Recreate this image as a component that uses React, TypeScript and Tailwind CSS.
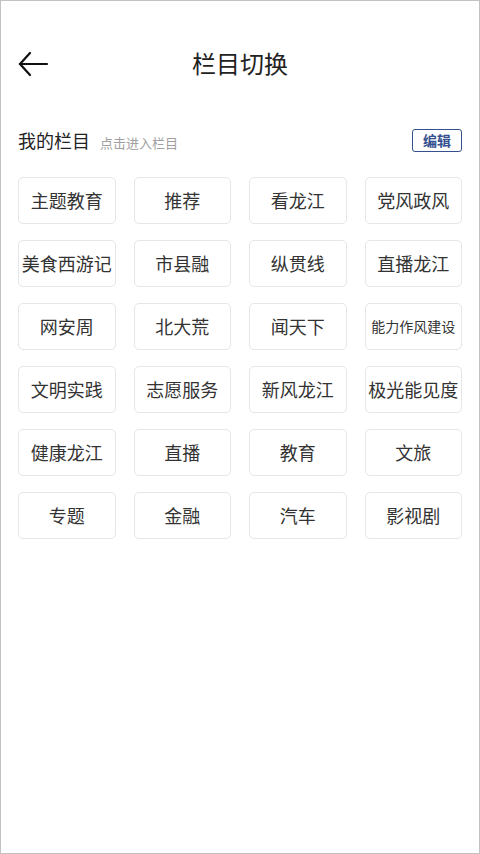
const channels = [
  '主题教育', '推荐', '看龙江', '党风政风',
  '美食西游记', '市县融', '纵贯线', '直播龙江',
  '网安周', '北大荒', '闻天下', '能力作风建设',
  '文明实践', '志愿服务', '新风龙江', '极光能见度',
  '健康龙江', '直播', '教育', '文旅',
  '专题', '金融', '汽车', '影视剧'
];

function BackArrow() {
  return (
    <svg width="32" height="32" viewBox="0 0 32 32" fill="none" stroke="#111" strokeWidth="2.2" strokeLinecap="round">
      <path d="M3 16 H30" />
      <path d="M13 5 L3 16 L13 27" />
    </svg>
  );
}

export default function App() {
  return (
    <div
      className="box-border flex h-[854px] w-[480px] flex-col border border-[#c2c2c2] bg-white"
      style={{ fontFamily: '"Noto Sans CJK SC", "Noto Sans", sans-serif' }}
    >
      <div className="relative mt-[30px] flex h-[64px] items-center justify-center">
        <div className="absolute left-[16px] top-[17px]">
          <BackArrow />
        </div>
        <span className="text-[24px] text-[#222]">栏目切换</span>
      </div>

      <div className="mt-[21px] flex h-[48px] items-center justify-between px-[17px]">
        <div className="flex items-baseline gap-[10px]">
          <span className="text-[18px] text-[#222]">我的栏目</span>
          <span className="text-[13px] text-[#a0a0a0]">点击进入栏目</span>
        </div>
        <button className="flex h-[23px] w-[50px] items-center justify-center rounded-[3px] border-[1.5px] border-[#34508f] text-[14px] font-bold leading-none text-[#34508f]">
          编辑
        </button>
      </div>

      <div className="mt-[13px] grid grid-cols-4 gap-x-[18px] gap-y-[16px] px-[17px]">
        {channels.map((name) => (
          <div
            key={name}
            className="flex h-[47px] items-center justify-center whitespace-nowrap rounded-[5px] border border-[#e6e6e6] text-[#333]"
          >
            <span className={name.length > 5 ? 'text-[14px]' : 'text-[18px]'}>{name}</span>
          </div>
        ))}
      </div>
    </div>
  );
}
